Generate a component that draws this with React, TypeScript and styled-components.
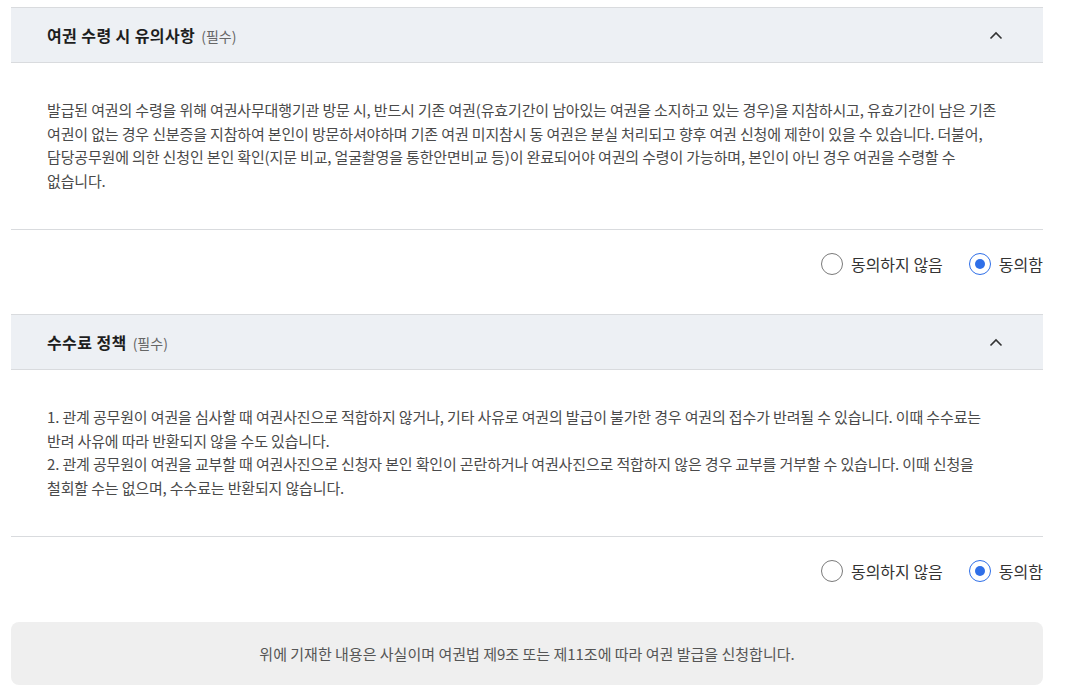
import React, { useState } from "react";
import styled, { createGlobalStyle } from "styled-components";

const GlobalStyle = createGlobalStyle`
	body {
		margin: 0;
		background: #ffffff;
		font-family: "Noto Sans CJK KR", "Noto Sans", sans-serif;
		color: #222;
	}
`;

const Page = styled.div`
	width: 1032px;
	padding: 7px 0 0 11px;
`;

const Section = styled.section`
	display: flex;
	flex-direction: column;
`;

const Header = styled.div`
	display: flex;
	align-items: center;
	justify-content: space-between;
	height: 54px;
	padding: 0 36px;
	background: #edf0f4;
	border-top: 1px solid #d9dbde;
	border-bottom: 1px solid #d9dbde;
`;

const Title = styled.h3`
	margin: 0;
	font-size: 16px;
	font-weight: 700;
	color: #1e1e1e;
	letter-spacing: 0.4px;
`;

const Required = styled.span`
	margin-left: 6px;
	font-size: 14px;
	font-weight: 400;
	color: #666;
	letter-spacing: 0;
`;

const Toggle = styled.button`
	display: flex;
	align-items: center;
	justify-content: center;
	width: 24px;
	height: 24px;
	margin-right: -1px;
	padding: 0;
	border: 0;
	background: none;
	cursor: pointer;
`;

const Body = styled.div`
	padding: 35px 36px 37px;
	border-bottom: 1px solid #d9dbde;
	font-size: 15px;
	line-height: 23.5px;
	color: #4a4a4a;
	letter-spacing: -0.15px;
	word-break: keep-all;
`;

const Paragraph = styled.p`
	margin: 0;
`;

const Choices = styled.div`
	display: flex;
	justify-content: flex-end;
	gap: 26px;
	padding: 23px 0 39px;
`;

const Choice = styled.label`
	display: flex;
	align-items: center;
	gap: 8px;
	height: 22px;
	font-size: 16px;
	line-height: 22px;
	color: #333;
	cursor: pointer;
`;

const Circle = styled.span<{ $checked: boolean }>`
	position: relative;
	box-sizing: border-box;
	width: 22px;
	height: 22px;
	border-radius: 50%;
	border: 1.5px solid ${({ $checked }) => ($checked ? "#2f6fe8" : "#7a7a7a")};
	background: #fff;

	&::after {
		content: "";
		display: ${({ $checked }) => ($checked ? "block" : "none")};
		position: absolute;
		top: 50%;
		left: 50%;
		width: 10px;
		height: 10px;
		margin: -5px 0 0 -5px;
		border-radius: 50%;
		background: #2f6fe8;
	}
`;

const Notice = styled.div`
	display: flex;
	align-items: center;
	justify-content: center;
	height: 63px;
	margin-top: 1px;
	border-radius: 8px;
	background: #efefef;
	font-size: 15px;
	color: #555;
`;

function Chevron() {
	return (
		<svg width="14" height="9" viewBox="0 0 14 9" fill="none">
			<path d="M1.5 7.5 7 2l5.5 5.5" stroke="#333" strokeWidth="1.6" />
		</svg>
	);
}

function Agreement({ title, children }: { title: string; children: React.ReactNode }) {
	const [agree, setAgree] = useState(true);
	return (
		<Section>
			<Header>
				<Title>
					{title}
					<Required>(필수)</Required>
				</Title>
				<Toggle aria-label="접기">
					<Chevron />
				</Toggle>
			</Header>
			<Body>{children}</Body>
			<Choices>
				<Choice onClick={() => setAgree(false)}>
					<Circle $checked={!agree} />
					동의하지 않음
				</Choice>
				<Choice onClick={() => setAgree(true)}>
					<Circle $checked={agree} />
					동의함
				</Choice>
			</Choices>
		</Section>
	);
}

export default function App() {
	return (
		<Page>
			<GlobalStyle />
			<Agreement title="여권 수령 시 유의사항">
				<Paragraph>
					발급된 여권의 수령을 위해 여권사무대행기관 방문 시, 반드시 기존 여권(유효기간이 남아있는 여권을 소지하고 있는 경우)을 지참하시고, 유효기간이 남은 기존
					여권이 없는 경우 신분증을 지참하여 본인이 방문하셔야하며 기존 여권 미지참시 동 여권은 분실 처리되고 향후 여권 신청에 제한이 있을 수 있습니다. 더불어,
					담당공무원에 의한 신청인 본인 확인(지문 비교, 얼굴촬영을 통한안면비교 등)이 완료되어야 여권의 수령이 가능하며, 본인이 아닌 경우 여권을 수령할 수
					없습니다.
				</Paragraph>
			</Agreement>
			<Agreement title="수수료 정책">
				<Paragraph>
					1. 관계 공무원이 여권을 심사할 때 여권사진으로 적합하지 않거나, 기타 사유로 여권의 발급이 불가한 경우 여권의 접수가 반려될 수 있습니다. 이때 수수료는
					반려 사유에 따라 반환되지 않을 수도 있습니다.
				</Paragraph>
				<Paragraph>
					2. 관계 공무원이 여권을 교부할 때 여권사진으로 신청자 본인 확인이 곤란하거나 여권사진으로 적합하지 않은 경우 교부를 거부할 수 있습니다. 이때 신청을
					철회할 수는 없으며, 수수료는 반환되지 않습니다.
				</Paragraph>
			</Agreement>
			<Notice>위에 기재한 내용은 사실이며 여권법 제9조 또는 제11조에 따라 여권 발급을 신청합니다.</Notice>
		</Page>
	);
}
